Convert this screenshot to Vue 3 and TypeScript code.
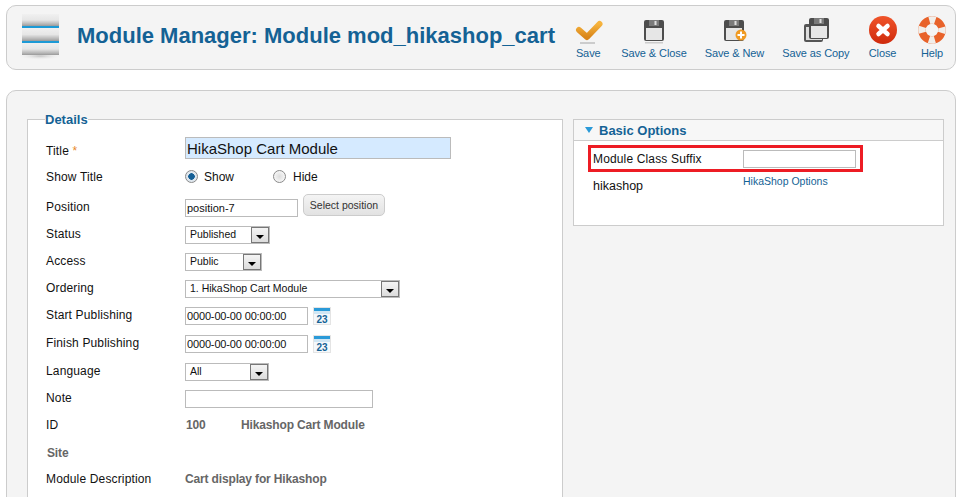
<script setup lang="ts">
const tools = [
  { label: 'Save', icon: 'save' },
  { label: 'Save & Close', icon: 'floppy' },
  { label: 'Save & New', icon: 'new' },
  { label: 'Save as Copy', icon: 'copy' },
  { label: 'Close', icon: 'close' },
  { label: 'Help', icon: 'help' },
]
</script>

<template>
  <div class="page">
    <header class="head">
      <svg class="logo" width="40" height="46" viewBox="0 0 40 46">
        <defs>
          <linearGradient id="slab" x1="0" y1="0" x2="0" y2="1">
            <stop offset="0" stop-color="#f0f0f0" />
            <stop offset="0.5" stop-color="#e6e6e6" />
            <stop offset="0.85" stop-color="#b4b4b4" />
            <stop offset="1" stop-color="#999" />
          </linearGradient>
          <radialGradient id="shadow">
            <stop offset="0" stop-color="#c4c4c4" />
            <stop offset="1" stop-color="#f4f4f4" stop-opacity="0" />
          </radialGradient>
        </defs>
        <ellipse cx="20" cy="42" rx="23" ry="4" fill="url(#shadow)" />
        <rect x="2" y="0" width="37" height="12" fill="url(#slab)" />
        <rect x="2" y="12" width="37" height="2" fill="#1c9ad6" />
        <rect x="2" y="14" width="37" height="13" fill="url(#slab)" />
        <rect x="2" y="27" width="37" height="2" fill="#1c9ad6" />
        <rect x="2" y="29" width="37" height="12" fill="url(#slab)" />
      </svg>
      <h1 class="title">Module Manager: Module mod_hikashop_cart</h1>
      <nav class="tools">
        <a v-for="t in tools" :key="t.label" class="tool" :class="'t-' + t.icon">
          <svg v-if="t.icon === 'save'" width="30" height="28" viewBox="0 0 30 28">
            <defs>
              <linearGradient id="chk" x1="0" y1="0" x2="0" y2="1">
                <stop offset="0" stop-color="#f6b33d" />
                <stop offset="1" stop-color="#d9861a" />
              </linearGradient>
            </defs>
            <path d="M6 13 L14 20 L26.500 7" fill="none" stroke="url(#chk)" stroke-width="6" stroke-linecap="round" stroke-linejoin="round" />
            <rect x="7" y="25" width="15" height="2" fill="#ccc" />
          </svg>
          <svg v-else-if="t.icon === 'floppy'" width="24" height="28" viewBox="0 0 24 28">
            <rect x="2" y="3" width="20" height="21" rx="2" fill="#4d4d4d" />
            <rect x="7" y="3" width="10" height="6" fill="#7a7a7a" />
            <rect x="12.500" y="4" width="2" height="4" fill="#ddd" />
            <rect x="4" y="11" width="16" height="12" fill="#e6e6e6" />
            <rect x="3" y="25" width="18" height="1.500" fill="#ccc" />
          </svg>
          <svg v-else-if="t.icon === 'new'" width="26" height="28" viewBox="0 0 26 28">
            <rect x="3" y="3" width="20" height="21" rx="2" fill="#4d4d4d" />
            <rect x="8" y="3" width="10" height="6" fill="#7a7a7a" />
            <rect x="13.500" y="4" width="2" height="4" fill="#ddd" />
            <rect x="5" y="11" width="16" height="12" fill="#e6e6e6" />
            <circle cx="20" cy="18" r="5.500" fill="#f09a22" />
            <path d="M20 14.500v7M16.500 18h7" stroke="#fff" stroke-width="2" />
          </svg>
          <svg v-else-if="t.icon === 'copy'" width="28" height="28" viewBox="0 0 28 28">
            <rect x="2" y="7" width="19" height="18" rx="2" fill="#555" />
            <rect x="4" y="10" width="16" height="13" fill="#ddd" />
            <rect x="7" y="1" width="20" height="21" rx="2" fill="#4d4d4d" />
            <rect x="12" y="1" width="10" height="6" fill="#7a7a7a" />
            <rect x="17.500" y="2" width="2" height="4" fill="#ddd" />
            <rect x="9" y="9" width="16" height="12" fill="#e6e6e6" />
          </svg>
          <svg v-else-if="t.icon === 'close'" width="30" height="30" viewBox="0 0 30 30">
            <defs>
              <linearGradient id="red" x1="0" y1="0" x2="0" y2="1">
                <stop offset="0" stop-color="#f0542a" />
                <stop offset="1" stop-color="#cf2a0c" />
              </linearGradient>
            </defs>
            <circle cx="15" cy="15" r="14" fill="url(#red)" />
            <path d="M10.500 11 L19.500 19 M19.500 11 L10.500 19" stroke="#fff" stroke-width="4.500" stroke-linecap="round" />
          </svg>
          <svg v-else width="28" height="30" viewBox="0 0 28 30">
            <circle cx="14" cy="15" r="10" fill="none" stroke="#e8622a" stroke-width="7.500" />
            <circle cx="14" cy="15" r="10" fill="none" stroke="#f1eeea" stroke-width="7.500" stroke-dasharray="6 9.708" stroke-dashoffset="3" />
          </svg>
          <span>{{ t.label }}</span>
        </a>
      </nav>
    </header>

    <main class="main">
      <fieldset class="details">
        <legend>Details</legend>
        <div class="row"><label class="l-title">Title <i>*</i></label><input class="in-title" value="HikaShop Cart Module" /></div>
        <div class="row">
          <label>Show Title</label>
          <span class="radio on"></span><span class="radio-text">Show</span>
          <span class="radio off"></span><span class="radio-hide">Hide</span>
        </div>
        <div class="row r-pos">
          <label>Position</label>
          <input class="in w113" value="position-7" />
          <button class="btn">Select position</button>
        </div>
        <div class="row"><label>Status</label><span class="sel w85">Published<b></b></span></div>
        <div class="row"><label>Access</label><span class="sel w77">Public<b></b></span></div>
        <div class="row"><label>Ordering</label><span class="sel w215">1. HikaShop Cart Module<b></b></span></div>
        <div class="row">
          <label>Start Publishing</label><input class="in w123 date" value="0000-00-00 00:00:00" />
          <svg class="cal" width="18" height="18" viewBox="0 0 18 18"><rect width="18" height="18" fill="#e4e4e4" /><rect x="1" y="1" width="16" height="16" fill="#f4f8fb" /><rect x="1" y="1" width="16" height="3" fill="#2a9ad8" /><rect x="1" y="4" width="16" height="3" fill="#cfe6f4" /><text x="9" y="15.500" class="cal-n">23</text></svg>
        </div>
        <div class="row r-1">
          <label>Finish Publishing</label><input class="in w123 date" value="0000-00-00 00:00:00" />
          <svg class="cal" width="18" height="18" viewBox="0 0 18 18"><rect width="18" height="18" fill="#e4e4e4" /><rect x="1" y="1" width="16" height="16" fill="#f4f8fb" /><rect x="1" y="1" width="16" height="3" fill="#2a9ad8" /><rect x="1" y="4" width="16" height="3" fill="#cfe6f4" /><text x="9" y="15.500" class="cal-n">23</text></svg>
        </div>
        <div class="row r-1"><label>Language</label><span class="sel w84">All<b></b></span></div>
        <div class="row"><label>Note</label><input class="in w188" /></div>
        <div class="row"><label>ID</label><strong class="id">100</strong><strong>Hikashop Cart Module</strong></div>
        <div class="row r-1"><strong class="site">Site</strong></div>
        <div class="row r-desc"><label>Module Description</label><strong>Cart display for Hikashop</strong></div>
      </fieldset>

      <section class="panel">
        <h3><span class="tri"></span>Basic Options</h3>
        <div class="mark">
          <label>Module Class Suffix</label>
          <input class="in w113 plain" />
        </div>
        <div class="hika">
          <label>hikashop</label>
          <a>HikaShop Options</a>
        </div>
      </section>
    </main>
  </div>
</template>

<style>
html, body { margin: 0; background: #fff; }
</style>

<style scoped>
.page {
  width: 959px;
  height: 497px;
  overflow: hidden;
  box-sizing: border-box;
  padding: 5px 3px 0 6px;
  font-family: "Liberation Sans", Arial, sans-serif;
  font-size: 12px;
  letter-spacing: 0.15px;
  color: #111;
}
.head {
  box-sizing: border-box;
  height: 65px;
  display: flex;
  align-items: flex-start;
  background: #f4f4f4;
  border: 1px solid #ccc;
  border-radius: 10px;
  padding: 8px 0 0 13px;
}
.logo { flex: none; }
.title {
  margin: 7px 0 0 17px;
  font-size: 22px;
  line-height: 30px;
  font-weight: bold;
  letter-spacing: 0;
  color: #146295;
  white-space: nowrap;
}
.tools {
  display: flex;
  margin-left: auto;
  padding-right: 9px;
  gap: 18px;
}
.tool {
  display: flex;
  flex-direction: column;
  align-items: center;
  justify-content: flex-end;
  height: 46px;
  font-size: 11px;
  line-height: 13px;
  letter-spacing: -0.1px;
  color: #146295;
  white-space: nowrap;
}
.tool svg { flex: none; margin-bottom: 2px; }
.t-close { margin-right: 2.500px; }
.main {
  box-sizing: border-box;
  margin-top: 20px;
  height: 440px;
  display: flex;
  align-items: flex-start;
  background: #f4f4f4;
  border: 1px solid #ccc;
  border-radius: 10px;
  padding: 20px 10px 0 20px;
}
.details {
  box-sizing: border-box;
  width: 536px;
  height: 400px;
  flex: none;
  margin: 0;
  padding: 9px 0 0 18px;
  background: #fff;
  border: 1px solid #ccc;
}
legend {
  margin-left: -1px;
  padding: 1px 0 0;
  font-size: 13px;
  font-weight: bold;
  line-height: 15px;
  letter-spacing: 0;
  color: #146295;
}
.row {
  display: flex;
  align-items: center;
  height: 27px;
}
.row label { flex: none; width: 139px; }
.row label.l-title { margin-top: 2px; }
.row label i { color: #e8872a; font-style: normal; }
.r-pos { margin-top: 3px; }
.r-1 { margin-top: 1px; }
.r-desc { margin-top: -1px; }
.in, .in-title {
  box-sizing: border-box;
  margin: 0;
  border: 1px solid #bbb;
  outline: none;
  font-family: inherit;
  color: #111;
  padding: 0 1px;
}
.in { height: 18px; margin-top: 2px; font-size: 11px; background: #fff; }
.in.plain { margin-top: 0; }
.date { letter-spacing: -0.15px; }
.in-title {
  width: 266px;
  height: 22px;
  margin-bottom: 3px;
  font-size: 15px;
  letter-spacing: 0;
  background: #d5eaff;
}
.w113 { width: 113px; }
.w123 { width: 123px; }
.w188 { width: 188px; }
.w77 { width: 77px; }
.w84 { width: 84px; }
.w85 { width: 85px; }
.w215 { width: 215px; }
.radio {
  box-sizing: border-box;
  width: 13px;
  height: 13px;
  border-radius: 50%;
  border: 1px solid #8a8a8a;
  background: radial-gradient(circle, #ddd, #fff);
  margin-right: 7px;
  flex: none;
}
.radio.on {
  margin-right: 6px;
  background: radial-gradient(circle, #145f96 0 3px, #dfe7ee 3.500px);
}
.radio-text { width: 69px; letter-spacing: 0; }
.radio-hide { letter-spacing: 0; }
.btn {
  box-sizing: border-box;
  width: 82px;
  height: 22px;
  margin: -4px 0 0 5px;
  padding: 0;
  font-family: inherit;
  font-size: 10.500px;
  letter-spacing: 0;
  color: #333;
  background: linear-gradient(#f4f4f4, #e2e2e2);
  border: 1px solid #ccc;
  border-radius: 5px;
}
.sel {
  box-sizing: border-box;
  position: relative;
  display: block;
  height: 18px;
  margin-top: 2px;
  line-height: 14px;
  font-size: 10.500px;
  letter-spacing: 0;
  padding-left: 4px;
  border: 1px solid #bbb;
  background: #fff;
}
.sel b {
  position: absolute;
  right: 0;
  top: 0;
  box-sizing: border-box;
  width: 18px;
  height: 16px;
  border: 1px solid #777;
  background: linear-gradient(#f4f4f4, #dcdcdc);
}
.sel b::after {
  content: "";
  position: absolute;
  left: 4px;
  top: 7px;
  border: 4px solid transparent;
  border-top: 4px solid #000;
  border-bottom: 0;
}
.cal { margin: 2px 0 0 5px; flex: none; }
.cal-n {
  font-size: 10px;
  font-weight: bold;
  letter-spacing: 0;
  fill: #146295;
  text-anchor: middle;
}
strong { color: #666; font-weight: bold; letter-spacing: -0.15px; }
.id { width: 55px; margin-left: 1px; }
.site { margin-left: 1px; }
.panel {
  box-sizing: border-box;
  width: 371px;
  height: 107px;
  margin-left: 10px;
  margin-top: 8px;
  background: #fff;
  border: 1px solid #ccc;
}
h3 {
  display: flex;
  align-items: center;
  margin: 0;
  height: 21px;
  box-sizing: border-box;
  padding-left: 11px;
  background: #f7f7f7;
  border-bottom: 1px solid #ccc;
  font-size: 13px;
  font-weight: bold;
  letter-spacing: 0;
  color: #146295;
}
.tri {
  width: 0;
  height: 0;
  margin-right: 6px;
  border: 4.500px solid transparent;
  border-top: 6px solid #2a9ad8;
  border-bottom: 0;
}
.mark {
  box-sizing: border-box;
  display: flex;
  align-items: center;
  width: 275px;
  height: 27px;
  margin: 4px 0 0 14px;
  padding-left: 2px;
  border: 3px solid #ed1c24;
}
.mark label { width: 150px; flex: none; }
.hika {
  display: flex;
  margin: 3px 0 0 19px;
}
.hika label { width: 150px; flex: none; padding-top: 4px; font-size: 12.500px; letter-spacing: 0; }
.hika a { font-size: 10.500px; color: #146295; line-height: 12px; letter-spacing: 0; }
</style>
